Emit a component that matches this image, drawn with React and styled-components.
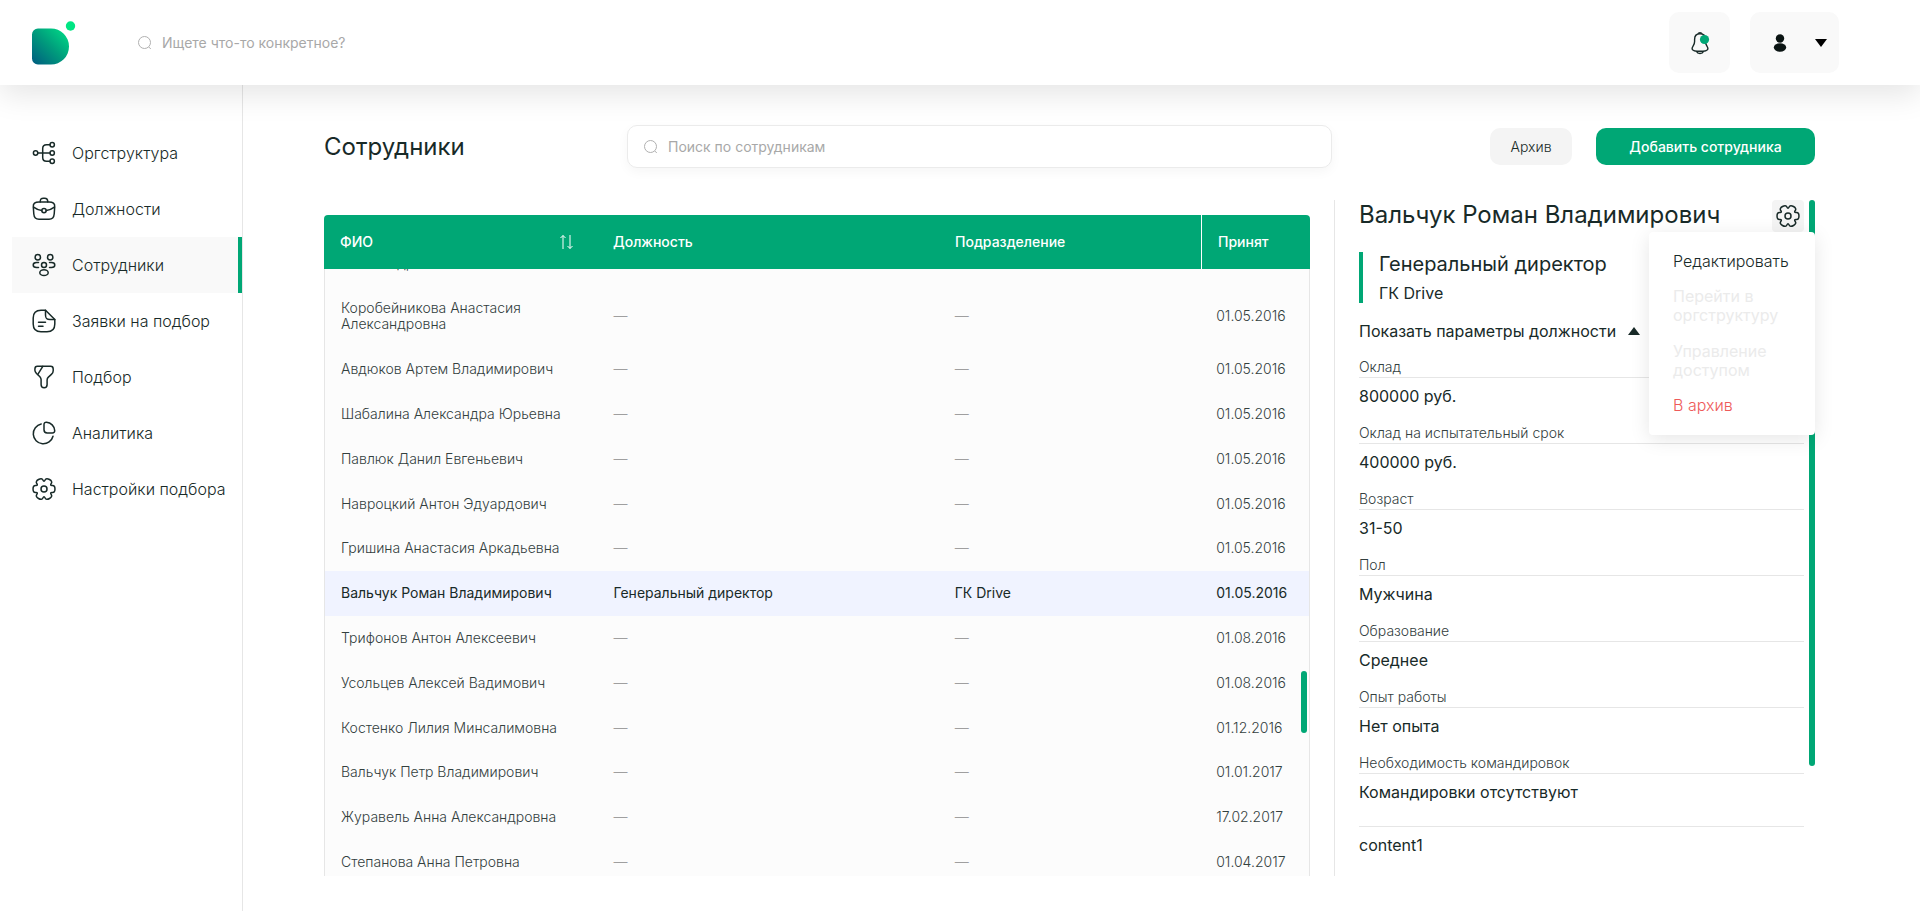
import React, { useLayoutEffect, useRef } from "react";
import styled, { createGlobalStyle } from "styled-components";

const employees = [
  { name: "Колесникова Анастасия Александровна", date: "01.05.2016" },
  { name: "Коробейникова Анастасия Александровна", date: "01.05.2016" },
  { name: "Авдюков Артем Владимирович", date: "01.05.2016" },
  { name: "Шабалина Александра Юрьевна", date: "01.05.2016" },
  { name: "Павлюк Данил Евгеньевич", date: "01.05.2016" },
  { name: "Навроцкий Антон Эдуардович", date: "01.05.2016" },
  { name: "Гришина Анастасия Аркадьевна", date: "01.05.2016" },
  {
    name: "Вальчук Роман Владимирович",
    position: "Генеральный директор",
    department: "ГК Drive",
    date: "01.05.2016",
    selected: true,
  },
  { name: "Трифонов Антон Алексеевич", date: "01.08.2016" },
  { name: "Усольцев Алексей Вадимович", date: "01.08.2016" },
  { name: "Костенко Лилия Минсалимовна", date: "01.12.2016" },
  { name: "Вальчук Петр Владимирович", date: "01.01.2017" },
  { name: "Журавель Анна Александровна", date: "17.02.2017" },
  { name: "Степанова Анна Петровна", date: "01.04.2017" },
];

const params = [
  ["Оклад", "800000 руб."],
  ["Оклад на испытательный срок", "400000 руб."],
  ["Возраст", "31-50"],
  ["Пол", "Мужчина"],
  ["Образование", "Среднее"],
  ["Опыт работы", "Нет опыта"],
  ["Необходимость командировок", "Командировки отсутствуют"],
  ["", "content1"],
];

// rounded cog with six teeth
const gearPath = (() => {
  const pts = [];
  for (let a = 0; a < 360; a += 60) {
    [
      [11.6, a - 19],
      [11.6, a + 19],
      [6.6, a + 30],
    ].forEach(([r, deg]) => {
      const t = (deg * Math.PI) / 180;
      pts.push([12 + r * Math.cos(t), 12 + r * Math.sin(t)]);
    });
  }
  const mid = (p, q) => `${(p[0] + q[0]) / 2} ${(p[1] + q[1]) / 2}`;
  const last = pts[pts.length - 1];
  return (
    `M${mid(last, pts[0])}` +
    pts
      .map((p, i) => `Q${p[0]} ${p[1]} ${mid(p, pts[(i + 1) % pts.length])}`)
      .join("") +
    "Z"
  );
})();

const icons = {
  structure: (
    <>
      <circle cx="3.6" cy="12" r="2.2" />
      <circle cx="20.2" cy="3.8" r="2.2" />
      <circle cx="20.2" cy="12" r="2.2" />
      <circle cx="20.2" cy="20.2" r="2.2" />
      <path d="M5.8 12H18M18 3.8h-3.5c-2.6 0-3.8 1.2-3.8 3.8v8.8c0 2.6 1.2 3.8 3.8 3.8H18" />
    </>
  ),
  briefcase: (
    <>
      <path d="M7 5h10c4 0 6 1.5 5.7 5l-.5 7c-.3 3.5-1.7 5.3-5.2 5.3H7c-3.5 0-4.9-1.8-5.2-5.3l-.5-7C1 6.5 3 5 7 5z" />
      <path d="M8.2 5c0-2.7.8-3.7 3.2-3.7h1.2c2.4 0 3.2 1 3.2 3.7" />
      <circle cx="12" cy="13.6" r="2.2" />
      <path d="M1.6 10.2c2.3 1.8 5 2.9 8.2 3.3M22.4 10.2c-2.3 1.8-5 2.9-8.2 3.3" />
    </>
  ),
  people: (
    <>
      <circle cx="5.8" cy="4.2" r="2.7" />
      <circle cx="18.2" cy="4.2" r="2.7" />
      <circle cx="12" cy="12" r="2.5" />
      <ellipse cx="12" cy="19.7" rx="4.2" ry="2.9" />
      <path d="M6.5 9.6H4.6C2.6 9.6 1.2 10.7 1.2 12.1s1.4 2.5 3.4 2.5h1.9M17.5 9.6h1.9c2 0 3.4 1.1 3.4 2.5s-1.4 2.5-3.4 2.5h-1.9" />
    </>
  ),
  request: (
    <>
      <path d="M13.5 1.2H9C3.5 1.2 1.2 3.5 1.2 9v6c0 5.5 2.3 7.8 7.8 7.8h6c5.5 0 7.8-2.3 7.8-7.8v-4.5z" />
      <path d="M22.8 10.5H18c-3.5 0-4.5-1-4.5-4.5V1.2M6.500 13.200h7M6.500 17.300h4.500" />
    </>
  ),
  funnel: (
    <>
      <path d="M5.4 1.3h13.2c1.6 0 2.6 1 2.6 2.6v1.8c0 1.5-.7 2.7-1.8 3.7l-3 2.7c-.9.8-1.3 1.7-1.3 3v4.3c0 1.9-1.3 3.3-3 3.3s-3-1.400-3-3.300v-4.800c0-1.100-.4-2-1.200-2.900L4.500 8.500C3.500 7.400 2.900 6.400 2.900 5.200V3.900c0-1.600.9-2.600 2.500-2.600z" />
      <path d="M10.8 1.3L5.8 9.4" />
    </>
  ),
  pie: (
    <>
      <path d="M9.2 3A10 10 0 1 0 21 15.2" />
      <path d="M12 3.6c0-1.7.9-2.4 2.5-2.3 4.5.4 7.9 3.8 8.200 8.200.1 1.600-.7 2.500-2.300 2.500h-5.200c-2.100 0-3.200-1.100-3.200-3.200z" />
    </>
  ),
  gear: (
    <>
      <path d={gearPath} />
      <circle cx="12" cy="12" r="3" />
    </>
  ),
};

const nav = [
  ["Оргструктура", "structure"],
  ["Должности", "briefcase"],
  ["Сотрудники", "people", true],
  ["Заявки на подбор", "request"],
  ["Подбор", "funnel"],
  ["Аналитика", "pie"],
  ["Настройки подбора", "gear"],
];

function Icon({ name }) {
  return (
    <LineIcon viewBox="0 0 24 24" aria-hidden="true">
      {icons[name]}
    </LineIcon>
  );
}

function SearchIcon() {
  return (
    <Lens viewBox="0 0 14 14" aria-hidden="true">
      <circle cx="6.5" cy="6.5" r="6" />
      <path d="M10.8 11l2 2" />
    </Lens>
  );
}

function Logo() {
  return (
    <svg width="44" height="44" viewBox="0 0 44 44" aria-hidden="true">
      <defs>
        <linearGradient id="logo" x1="0" y1="1" x2="1" y2="0">
          <stop offset="0" stopColor="#005b80" />
          <stop offset="0.5" stopColor="#009c7c" />
          <stop offset="1" stopColor="#00e287" />
        </linearGradient>
      </defs>
      <path
        d="M6 7.5h13a18 18 0 0 1 0 36H6a6 6 0 0 1-6-6v-24a6 6 0 0 1 6-6z"
        fill="url(#logo)"
      />
      <circle cx="38.5" cy="5" r="4.7" fill="#00e583" />
    </svg>
  );
}

function Header() {
  return (
    <TopBar>
      <LogoLink href="#" aria-label="Drive">
        <Logo />
      </LogoLink>
      <GlobalSearch>
        <SearchIcon />
        <SearchInput
          type="search"
          aria-label="Поиск"
          placeholder="Ищете что-то конкретное?"
        />
      </GlobalSearch>
      <TopButton type="button" aria-label="Уведомления">
        <svg width="20" height="24" viewBox="0 0 20 24">
          <path
            d="M10 2.8c-3.6 0-5.4 2.4-5.4 5.6v2.2c0 1.6-.4 2.7-1.3 4.1-.9 1.5-1.5 2.5-1.1 3.5.5 1.3 3.6 2.1 7.8 2.1s7.300-.8 7.800-2.100c.4-1-.2-2-1.100-3.500-.9-1.400-1.300-2.500-1.300-4.100V8.400c0-3.200-1.800-5.600-5.400-5.600z"
            fill="none"
            stroke="#182a28"
            strokeWidth="1.4"
          />
          <path
            d="M8 2.800c.3-.8 1-1.200 2-1.200s1.700.4 2 1.200M6.500 20.500c.6 1.400 1.800 2 3.500 2s2.900-.6 3.500-2"
            fill="none"
            stroke="#182a28"
            strokeWidth="1.4"
          />
          <circle cx="14.5" cy="8.5" r="4.6" fill="#00a775" />
        </svg>
      </TopButton>
      <ProfileButton type="button" aria-label="Профиль">
        <svg width="24" height="24" viewBox="0 0 24 24" fill="#0b1413">
          <circle cx="12" cy="7.5" r="4.2" />
          <ellipse cx="12" cy="16.5" rx="6.2" ry="4.2" />
        </svg>
        <svg width="12" height="8" viewBox="0 0 12 8">
          <path d="M0 0h12L6 8z" />
        </svg>
      </ProfileButton>
    </TopBar>
  );
}

function EmployeeTable() {
  const rows = useRef(null);

  useLayoutEffect(() => {
    rows.current.scrollTop = 45;
  }, []);

  return (
    <TablePane>
      <Table>
        <TableHead>
          <TableRow>
            <HeadCell scope="col">
              <SortButton type="button">
                ФИО
                <svg width="13" height="16" viewBox="0 0 13 16">
                  <path
                    d="M3 15V1.5M.5 4L3 1.5 5.5 4M10 1v13.5M7.5 12l2.5 2.5 2.5-2.5"
                    fill="none"
                    stroke="#fff"
                  />
                </svg>
              </SortButton>
            </HeadCell>
            <HeadCell scope="col">Должность</HeadCell>
            <HeadCell scope="col">Подразделение</HeadCell>
            <HeadCell scope="col" $divided>
              Принят
            </HeadCell>
          </TableRow>
        </TableHead>
        <TableBody ref={rows}>
          {employees.map((e) => (
            <EmployeeRow key={e.name} $selected={e.selected}>
              <Cell>{e.name}</Cell>
              <Cell>{e.position || <Dash>—</Dash>}</Cell>
              <Cell>{e.department || <Dash>—</Dash>}</Cell>
              <DateCell>{e.date}</DateCell>
            </EmployeeRow>
          ))}
        </TableBody>
      </Table>
      <TableThumb />
    </TablePane>
  );
}

function EmployeeDetail() {
  return (
    <DetailPane>
      <DetailScroll>
        <DetailHead>
          <DetailName>Вальчук Роман Владимирович</DetailName>
          <GearButton type="button" aria-label="Настройки">
            <Icon name="gear" />
          </GearButton>
        </DetailHead>
        <Position>
          <PositionTitle>Генеральный директор</PositionTitle>
          <PositionDept>ГК Drive</PositionDept>
        </Position>
        <Toggle type="button">
          Показать параметры должности
          <svg width="12" height="8" viewBox="0 0 12 8">
            <path d="M0 8h12L6 0z" fill="#182a28" />
          </svg>
        </Toggle>
        <Params>
          {params.map(([label, value]) => (
            <Param key={value}>
              <dt>{label}</dt>
              <dd>{value}</dd>
            </Param>
          ))}
        </Params>
      </DetailScroll>
      <DetailThumb />
      <Menu>
        <MenuItem type="button">Редактировать</MenuItem>
        <MenuItem type="button" disabled>
          Перейти в оргструктуру
        </MenuItem>
        <MenuItem type="button" disabled>
          Управление доступом
        </MenuItem>
        <MenuItem type="button" $danger>
          В архив
        </MenuItem>
      </Menu>
    </DetailPane>
  );
}

export default function App() {
  return (
    <Page>
      <GlobalStyle />
      <Header />
      <Body>
        <Sidebar>
          {nav.map(([label, icon, active]) => (
            <NavLink key={label} href="#" $active={active}>
              <Icon name={icon} />
              {label}
            </NavLink>
          ))}
        </Sidebar>
        <Main>
          <Toolbar>
            <Title>Сотрудники</Title>
            <SearchBox>
              <SearchIcon />
              <SearchInput
                type="search"
                aria-label="Поиск по сотрудникам"
                placeholder="Поиск по сотрудникам"
              />
            </SearchBox>
            <Actions>
              <ArchiveButton type="button">Архив</ArchiveButton>
              <AddButton type="button">Добавить сотрудника</AddButton>
            </Actions>
          </Toolbar>
          <Content>
            <EmployeeTable />
            <EmployeeDetail />
          </Content>
        </Main>
      </Body>
    </Page>
  );
}

const GlobalStyle = createGlobalStyle`
  * {
    box-sizing: border-box;
  }

  body {
    margin: 0;
    background: #fff;
    color: #182a28;
    font-family: Inter, "Open Sans", sans-serif;
    font-size: 16px;
  }

  button, input {
    font: inherit;
    color: inherit;
    border: 0;
    padding: 0;
    background: none;
  }

  button {
    cursor: pointer;
  }
`;

const Page = styled.div`
  display: flex;
  flex-direction: column;
  height: 100vh;
`;

const TopBar = styled.header`
  position: relative;
  z-index: 2;
  display: flex;
  align-items: center;
  height: 85px;
  padding: 0 81px 0 32px;
  background: #fff;
  box-shadow: 0 10px 30px rgba(0, 0, 0, 0.1);
`;

const LogoLink = styled.a`
  display: flex;
`;

const GlobalSearch = styled.label`
  display: flex;
  align-items: center;
  gap: 10px;
  flex: 1;
  margin-left: 62px;
`;

const Lens = styled.svg`
  flex: none;
  width: 14px;
  height: 14px;
  fill: none;
  stroke: #b0b0b0;
`;

const SearchInput = styled.input`
  flex: 1;
  outline: none;
  font-size: 14px;
  appearance: none;

  &::placeholder {
    color: #a8a8a8;
  }
`;

const TopButton = styled.button`
  display: flex;
  align-items: center;
  justify-content: center;
  width: 61px;
  height: 61px;
  border-radius: 10px;
  background: #f9f9f9;
`;

const ProfileButton = styled(TopButton)`
  justify-content: space-between;
  width: 89px;
  margin-left: 20px;
  padding: 0 12px 0 18px;
`;

const Body = styled.div`
  display: flex;
  flex: 1;
  min-height: 0;
`;

const Sidebar = styled.nav`
  flex: none;
  width: 243px;
  padding: 40px 0 0 12px;
  border-right: 1px solid #e6e6e6;
`;

const NavLink = styled.a`
  display: flex;
  align-items: center;
  gap: 16px;
  height: 56px;
  padding-left: 20px;
  color: #182a28;
  font-weight: 300;
  text-decoration: none;
  white-space: nowrap;
  background: ${(p) => (p.$active ? "#f9f9f9" : "none")};
  border-right: 4px solid ${(p) => (p.$active ? "#00a775" : "transparent")};
`;

const LineIcon = styled.svg`
  flex: none;
  width: 24px;
  height: 24px;
  fill: none;
  stroke: #182a28;
  stroke-width: 1.5;
  stroke-linecap: round;
  stroke-linejoin: round;
`;

const Main = styled.main`
  display: flex;
  flex-direction: column;
  flex: 1;
  min-width: 0;
  padding: 40px 105px 35px 81px;
`;

const Toolbar = styled.div`
  display: grid;
  grid-template-columns: 303fr 705fr 483fr;
  align-items: center;
  margin-bottom: 32px;
`;

const Title = styled.h1`
  margin: 0;
  font-size: 24px;
  font-weight: 400;
`;

const SearchBox = styled.label`
  display: flex;
  align-items: center;
  gap: 10px;
  height: 43px;
  padding: 0 16px;
  border: 1px solid #ebebeb;
  border-radius: 10px;
  box-shadow: 0 4px 12px rgba(0, 0, 0, 0.04);
`;

const Actions = styled.div`
  display: flex;
  justify-content: flex-end;
  gap: 24px;
`;

const ArchiveButton = styled.button`
  min-width: 82px;
  height: 37px;
  border-radius: 10px;
  background: #f4f4f4;
  font-size: 14px;
  font-weight: 300;
`;

const AddButton = styled(ArchiveButton)`
  min-width: 219px;
  background: #00a775;
  color: #fff;
  font-weight: 500;
`;

const Content = styled.div`
  display: grid;
  grid-template-columns: 986fr 481fr;
  grid-template-rows: 100%;
  gap: 24px;
  flex: 1;
  min-height: 0;
`;

const TablePane = styled.section`
  position: relative;
  min-width: 0;
  padding-top: 15px;
`;

const Table = styled.table`
  display: flex;
  flex-direction: column;
  height: 100%;
  font-size: 14px;
  line-height: 1.2;
`;

const TableHead = styled.thead`
  display: block;
  border-radius: 4px 4px 0 0;
  background: #00a775;
  color: #fff;
`;

const TableBody = styled.tbody`
  display: block;
  flex: 1;
  min-height: 0;
  overflow-y: auto;
  scrollbar-width: none;
  background: #fcfcfc;
  border: solid #e6e6e6;
  border-width: 0 1px;
`;

const TableRow = styled.tr`
  display: grid;
  grid-template-columns: 273fr 342fr 262fr 109fr;
`;

const HeadCell = styled.th`
  display: flex;
  align-items: center;
  height: 54px;
  padding: 0 0 0 16px;
  font-weight: 500;
  border-left: ${(p) => (p.$divided ? "1px solid #fff" : "0")};
`;

const SortButton = styled.button`
  display: flex;
  align-items: center;
  justify-content: space-between;
  width: 100%;
  padding-right: 24px;
`;

const EmployeeRow = styled(TableRow)`
  align-items: center;
  background: ${(p) => (p.$selected ? "#f0f3ff" : "none")};
  color: ${(p) => (p.$selected ? "#182a28" : "#33403e")};
  font-weight: ${(p) => (p.$selected ? 400 : 300)};
`;

const Cell = styled.td`
  padding: 14px 16px;
`;

const DateCell = styled(Cell)`
  padding-right: 0;
`;

const Dash = styled.span`
  color: #8a8a8a;
`;

const Thumb = styled.div`
  position: absolute;
  width: 6px;
  border-radius: 3px;
  background: #00a775;
`;

const TableThumb = styled(Thumb)`
  top: 471px;
  right: 3px;
  height: 62px;
`;

const DetailPane = styled.aside`
  position: relative;
  min-width: 0;
  border-left: 1px solid #e6e6e6;
`;

const DetailScroll = styled.div`
  height: 100%;
  padding: 0 11px 0 24px;
  overflow-y: auto;
  scrollbar-width: none;
`;

const DetailThumb = styled(Thumb)`
  top: 0;
  right: 0;
  height: 566px;
`;

const DetailHead = styled.div`
  display: flex;
  justify-content: space-between;
  margin-bottom: 20px;
`;

const DetailName = styled.h2`
  margin: 0;
  font-size: 24px;
  line-height: 30px;
  font-weight: 400;
`;

const GearButton = styled.button`
  display: flex;
  align-items: center;
  justify-content: center;
  width: 32px;
  height: 32px;
  border-radius: 4px;
  background: #f4f4f4;
`;

const Position = styled.div`
  padding-left: 16px;
  border-left: 4px solid #00a775;
`;

const PositionTitle = styled.div`
  font-size: 20px;
  line-height: 24px;
`;

const PositionDept = styled.div`
  margin-top: 7px;
  line-height: 20px;
`;

const Toggle = styled.button`
  display: flex;
  align-items: center;
  gap: 12px;
  margin-top: 18px;
  line-height: 20px;
`;

const Params = styled.dl`
  margin: 16px 0 0;
`;

const Param = styled.div`
  margin-bottom: 17px;

  dt {
    min-height: 8px;
    border-bottom: 1px solid #e6e6e6;
    color: #33403e;
    font-size: 14px;
    line-height: 20px;
    font-weight: 300;
  }

  dd {
    margin: 8px 0 0;
    line-height: 20px;
  }
`;

const Menu = styled.div`
  position: absolute;
  top: 32px;
  right: 0;
  display: flex;
  flex-direction: column;
  gap: 16px;
  width: 166px;
  padding: 20px 24px;
  border-radius: 4px;
  background: #fff;
  box-shadow: 0 4px 20px rgba(0, 0, 0, 0.1);
`;

const MenuItem = styled.button`
  color: ${(p) => (p.$danger ? "#ee5a5a" : "#182a28")};
  font-weight: 300;
  line-height: 1.2;
  text-align: left;

  &:disabled {
    color: #ebebeb;
    font-weight: 400;
    cursor: default;
  }
`;
